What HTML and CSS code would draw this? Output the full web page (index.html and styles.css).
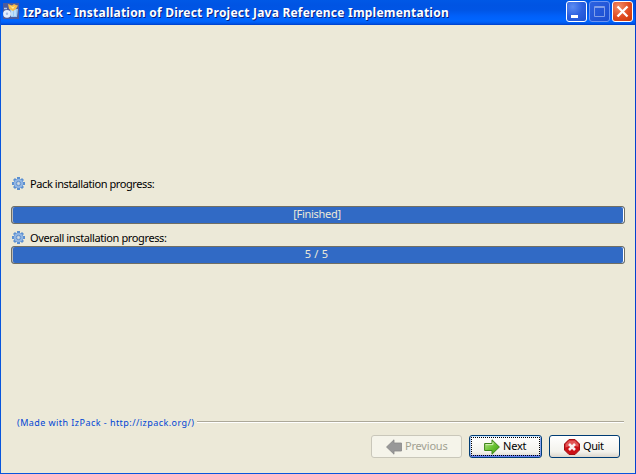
FILE: index.html
```html
<!DOCTYPE html>
<html lang="en">
<head>
<meta charset="utf-8">
<title>IzPack</title>
<link rel="stylesheet" href="styles.css">
</head>
<body>
<svg width="0" height="0" class="defs">
  <defs>
    <linearGradient id="green" x1="0" y1="0" x2="1" y2="1"><stop offset="0" stop-color="#c4e89c"/><stop offset=".5" stop-color="#6cc434"/><stop offset="1" stop-color="#3c9a10"/></linearGradient>
    <symbol id="gear" viewBox="0 0 13 13">
      <path d="M5 0h3v2h1l1-1 2 2-1 1v1h2v3h-2v1l1 1-2 2-1-1H8v2H5v-2H4l-1 1-2-2 1-1V8H0V5h2V4L1 3l2-2 1 1h1z" fill="#5b8fd0"/>
      <circle cx="6.5" cy="6.5" r="4.6" fill="#92b6e4"/>
      <circle cx="6.5" cy="6.5" r="2.2" fill="#b4cae6" stroke="#5c8cc8" stroke-width=".9"/>
      <circle cx="6.5" cy="6.5" r=".9" fill="#dcdcd4"/>
    </symbol>
  </defs>
</svg>
<div class="window">
  <header class="titlebar">
    <svg class="app-icon" viewBox="0 0 16 16">
      <rect width="16" height="16" fill="#4d5b9c"/>
      <path d="M7 6h8l-1 8H8z" fill="#9ccaf4"/>
      <path d="M9 7v6M12 7v6" stroke="#e2f2ff"/>
      <path d="M5 1l4 1.5L11 1l2 1 2 .5-2 3.5-3 2-4-2z" fill="#f8bd48"/>
      <path d="M7 3l3 1 2-1-2 3z" fill="#ffe995"/>
      <circle cx="4" cy="10.8" r="3.9" fill="#e4effd"/>
      <circle cx="4" cy="10.8" r="1.2" fill="#a4bce4"/>
      <path d="M1 5.5h3" stroke="#b2c6ea" stroke-width="1.5"/>
    </svg>
    <h1 class="title">IzPack - Installation of Direct Project Java Reference Implementation</h1>
    <div class="controls">
      <span class="control"><svg viewBox="0 0 21 21"><path d="M5 14h7v3H5z" fill="#fff"/></svg></span>
      <span class="control dim"><svg viewBox="0 0 21 21"><path d="M5.5 5.5h10v10h-10zM5 6.5h11" fill="none" stroke="#809ee8"/></svg></span>
      <span class="control close"><svg viewBox="0 0 21 21"><path d="M5.5 5.5l10 10M15.5 5.5l-10 10" stroke="#fff" stroke-width="2.3"/></svg></span>
    </div>
  </header>
  <main class="content">
    <div class="label"><svg class="gear"><use href="#gear"/></svg><span class="text-pack">Pack installation progress:</span></div>
    <div class="bar first"><span class="finished">[Finished]</span></div>
    <div class="label second"><svg class="gear"><use href="#gear"/></svg><span class="text-overall">Overall installation progress:</span></div>
    <div class="bar"><span class="count">5 / 5</span></div>
  </main>
  <footer class="footer">
    <div class="credit"><span class="credit-text">(Made with IzPack - http://izpack.org/)</span><i class="rule"></i></div>
    <div class="buttons">
      <div class="button previous"><svg viewBox="0 0 16 16"><path d="M.5 8L8 .8V4h7.5v8H8v3.2z" fill="#989898" stroke="#888" stroke-width=".8"/></svg><span>Previous</span></div>
      <div class="button next"><svg viewBox="0 0 16 16"><path d="M15.4 8L8 .8V4.5H.6v7H8v3.7z" fill="url(#green)" stroke="#3c8418"/><path d="M1.7 5.6h7.2V3.3" fill="none" stroke="#d4f0b8"/></svg><span>Next</span></div>
      <div class="button quit"><svg viewBox="0 0 16 16"><path d="M5 .5h6L15.5 5v6L11 15.5H5L.5 11V5z" fill="#cc1016" stroke="#a01014"/><path d="M5.3 1.5h5.4l3.8 3.8v2.4Q8 6 1.5 8.5V5.3z" fill="#e25656"/><path d="M5 5l6 6M11 5l-6 6" stroke="#f8f0f0" stroke-width="2.6"/></svg><span>Quit</span></div>
    </div>
  </footer>
</div>
</body>
</html>
```
FILE: styles.css
```css
* { box-sizing: border-box; }
body { margin: 0; font: 11px/14px "Noto Sans", sans-serif; color: #000; }
.defs { position: absolute; }
.window {
  width: 636px; height: 474px; display: flex; flex-direction: column;
  background: #ece9d8; border: solid #0855dd; border-width: 0 1px 1px; border-right-color: #0441d0; overflow: hidden;
}
.titlebar {
  flex: none; height: 25px; margin: 0 -1px; padding: 0 3px; display: flex;
  background: linear-gradient(#0058e6 0, #0054e3 5px, #0055e5 10px, #0060fa 16px, #0066ff 21px, #005bf0 23px, #0040c8 25px);
}
.app-icon { width: 16px; height: 16px; margin: 3px 4px 0 0; flex: none; }
.title {
  margin: 0; flex: 1; font: bold 12px/25px "Noto Sans", sans-serif; color: #fff;
  white-space: nowrap; text-shadow: 1px 1px #0b1f80; letter-spacing: .22px;
}
.controls { display: flex; gap: 2px; padding-top: 1px; }
.control {
  width: 21px; height: 21px; border: 1px solid #fff; border-radius: 3px;
  background: radial-gradient(circle at 30% 25%, #5c8cf2, #2c60e0 50%, #1c50d0);
}
.control svg { display: block; width: 21px; height: 21px; margin: -1px; }
.dim { border-color: #6c94f0; background: linear-gradient(135deg, #2c62e0, #1c4dd0); }
.close { background: radial-gradient(circle at 30% 25%, #f08c68, #e04a20 55%, #c83808); }
.content { flex: 1; padding: 151px 10px 0; }
.label { display: flex; align-items: center; height: 15px; gap: 5px; }
.text-pack { letter-spacing: -.41px; }
.text-overall { letter-spacing: -.38px; }
.gear { width: 13px; height: 13px; margin-left: 1px; }
.second { margin-top: 6px; margin-bottom: 1px; }
.bar {
  height: 18px; border: 1px solid #716f64; border-radius: 3px; background: #316ac5;
  box-shadow: inset 1px 0 #b8b8b8, inset -1px 0 #fff; color: #ece9d8; text-align: center; line-height: 14px;
}
.first { margin-top: 15px; }
.finished { letter-spacing: -.3px; margin-right: 2px; }
.count { letter-spacing: .2px; margin-right: 3px; }
.footer { height: 58px; padding: 0 11px 0 16px; }
.credit { display: flex; gap: 3px; height: 15px; color: #0046d5; font-size: 9px; line-height: 16px; }
.credit-text { white-space: nowrap; letter-spacing: .45px; }
.rule { flex: 1; height: 2px; margin-top: 6px; background: linear-gradient(#aca899 50%, #fff 50%); }
.buttons { display: flex; justify-content: flex-end; gap: 7px; padding: 5px 4px 0 0; }
.button {
  height: 23px; border: 1px solid #003c74; border-radius: 3px; display: flex; align-items: center; gap: 3px;
  background: linear-gradient(#fff, #f3f2ec 75%, #dcd6cc); line-height: 20px;
}
.button svg { width: 16px; height: 16px; flex: none; }
.button span { margin-top: -1px; }
.previous { width: 91px; padding-left: 14px; background: #f5f4ea; border-color: #c9c7ba; color: #a1a192; letter-spacing: -.2px; }
.next { width: 73px; padding-left: 14px; box-shadow: inset 0 1px #cee7ff, inset 0 -2px #6982ee, inset 1px 0 #a6c4f4, inset -1px 0 #8aa4ee; position: relative; letter-spacing: -.2px; }
.next::after { content: ""; position: absolute; inset: 1px; border: 1px dotted #000; }
.quit { width: 71px; padding-left: 14px; letter-spacing: -.4px; }
```
